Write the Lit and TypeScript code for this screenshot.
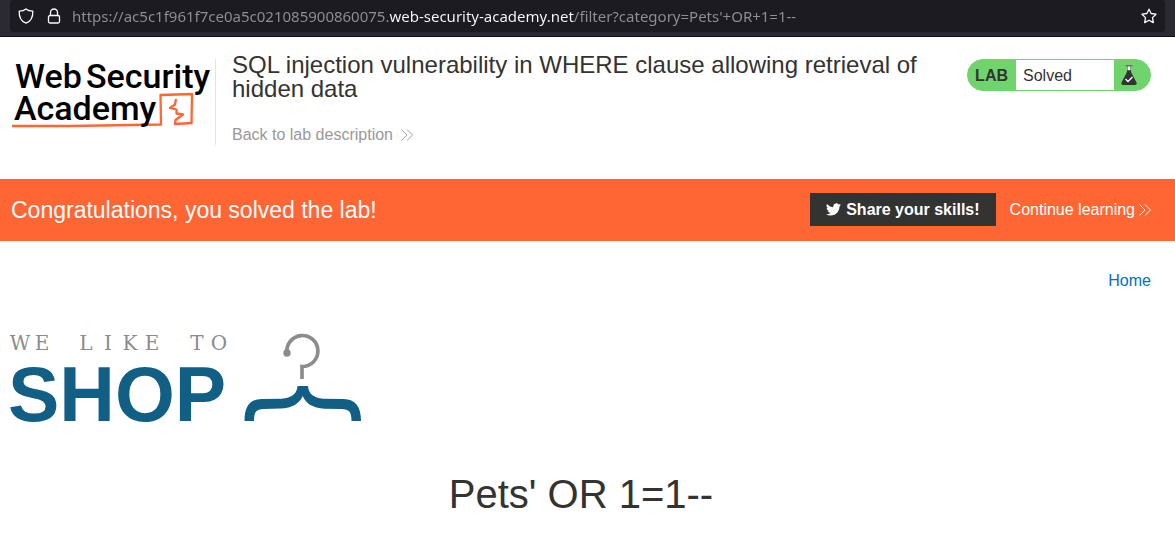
import { LitElement, html, css } from "lit";
import { customElement } from "lit/decorators.js";

const chevrons = html`<svg class="chevrons" viewBox="0 0 12 12" aria-hidden="true">
  <path d="M.5 .5 6 6 .5 11.5M6 .5 11.5 6 6 11.5" fill="none" stroke="currentColor" stroke-width=".9" />
</svg>`;

@customElement("address-bar")
class AddressBar extends LitElement {
  static styles = css`
    :host {
      display: block;
      background: #2b2a33;
      border-bottom: 1px solid #0c0c0d;
      padding: 0 10px 4px;
    }
    .field {
      display: flex;
      align-items: center;
      height: 32px;
      padding: 0 8px;
      background: #1c1b22;
      border-radius: 4px;
      color: #fbfbfe;
    }
    .icon {
      width: 16px;
      height: 16px;
      flex: none;
      fill: none;
      stroke: currentColor;
      stroke-width: 1.3;
      stroke-linejoin: round;
    }
    .lock {
      margin: 0 10px 0 12px;
    }
    .url {
      flex: 1;
      min-width: 0;
      height: 24px;
      padding: 0;
      border: 0;
      outline: 0;
      font: 15px/24px "Noto Sans", sans-serif;
      color: transparent;
      caret-color: #fbfbfe;
      background: linear-gradient(90deg, #8f8f96 317px, #fbfbfe 317px, #fbfbfe 502px, #8f8f96 502px);
      background-clip: text;
      -webkit-background-clip: text;
    }
    .star {
      display: flex;
      padding: 0;
      border: 0;
      background: none;
      color: inherit;
    }
  `;

  render() {
    return html`<div class="field">
      <svg class="icon" viewBox="0 0 16 16" aria-hidden="true">
        <path d="M8 .9C6.4 2.2 3.5 3 1.2 3.2 1 8.8 3.2 13.4 8 15.2 12.8 13.4 15 8.8 14.8 3.2 12.5 3 9.6 2.2 8 .9Z" />
      </svg>
      <svg class="icon lock" viewBox="0 0 16 16" aria-hidden="true">
        <rect x="2.5" y="7.5" width="11" height="7.5" rx="1.5" />
        <path d="M4.5 7.500V4.500a3.500 3.500 0 0 1 7 0V7.500" />
      </svg>
      <input
        class="url"
        type="text"
        aria-label="Address"
        spellcheck="false"
        value="https://ac5c1f961f7ce0a5c021085900860075.web-security-academy.net/filter?category=Pets'+OR+1=1--"
      />
      <button class="star" aria-label="Bookmark this page">
        <svg class="icon" viewBox="0 0 16 16" aria-hidden="true">
          <path d="M8 1.2 10.1 5.5 15 6.2 11.5 9.6 12.3 14.6 8 12.3 3.7 14.6 4.5 9.6 1 6.2 5.9 5.5Z" />
        </svg>
      </button>
    </div>`;
  }
}

@customElement("academy-logo")
class AcademyLogo extends LitElement {
  static styles = css`
    :host {
      display: block;
      flex: none;
    }
    .logo {
      display: block;
      width: 204px;
      height: 86px;
      overflow: visible;
    }
    .name {
      font: 500 34px Roboto, sans-serif;
      fill: #000;
    }
    .line {
      fill: none;
      stroke: #ff6633;
      stroke-width: 2.3;
      stroke-linejoin: round;
    }
  `;

  render() {
    return html`<svg class="logo" viewBox="0 0 204 86" role="img" aria-label="Web Security Academy">
      <path class="line" d="M1 67 60 67 150 65.5 149.500 36 181 35 180.500 65" />
      <path class="line" d="M165 40 164 45.5 159 49 165.5 50.5 165.500 54.500 172 55.500 164.500 61 164 65 181 64" />
      <text class="name" x="4" y="29">Web</text>
      <text class="name" x="75" y="29">Security</text>
      <text class="name" x="3" y="61">Academy</text>
    </svg>`;
  }
}

@customElement("lab-status")
class LabStatus extends LitElement {
  static styles = css`
    :host {
      display: flex;
      flex: none;
      align-items: center;
      box-sizing: border-box;
      height: 32px;
      border: 1px solid #70d46c;
      border-radius: 16px;
      overflow: hidden;
      background: #70d46c;
      font: 16px/30px "Liberation Sans", sans-serif;
      color: #333332;
    }
    .tag {
      padding: 2px 8px 0 7px;
      font-weight: 700;
    }
    .state {
      box-sizing: border-box;
      width: 98px;
      padding: 1px 7px 0;
      height: 30px;
      background: #fff;
    }
    .flask {
      width: 16px;
      height: 20px;
      margin: 0 13px 0 7px;
    }
  `;

  render() {
    return html`<span class="tag">LAB</span><span class="state">Solved</span>
      <svg class="flask" viewBox="0 0 16 20" aria-hidden="true">
        <path d="M6 .8V7L.5 17.500Q-.3 20 2 20H14Q16.300 20 15.500 17.500L10 7V.8Z" fill="#333332" />
        <path d="M6.500 1.200h3v4h-3z" fill="#fff" />
        <path d="M4.500 .6h7" stroke="#5c7a5a" stroke-width="1.2" />
        <path d="M4.500 14 7 16.500 11.500 12" fill="none" stroke="#fff" stroke-width="1.3" />
      </svg>`;
  }
}

@customElement("shop-logo")
class ShopLogo extends LitElement {
  static styles = css`
    :host {
      display: block;
    }
    .logo {
      display: block;
      width: 352px;
      height: 92px;
      overflow: visible;
    }
    .tagline {
      font: 20px "DejaVu Serif", serif;
      text-anchor: middle;
      fill: #8c8c8c;
    }
    .shop {
      font: 700 77px "Liberation Sans", sans-serif;
      fill: #115f84;
    }
  `;

  render() {
    return html`<svg class="logo" viewBox="0 0 352 92" role="img" aria-label="We like to shop">
      <text class="tagline" x="9 31 53 75 97 119 141 163 186 208" y="17">WE LIKE TO</text>
      <text class="shop" x="-3" y="88">SHOP</text>
      <path d="M276 20A15.500 15.500 0 1 1 291 33.500V46" fill="none" stroke="#8c8c8c" stroke-width="3.7" />
      <circle cx="276" cy="20" r="3.7" fill="#8c8c8c" />
      <path d="M286.500 53H297C297.500 60.500 302.500 65 312.500 65.700L332.500 66C344.500 66.500 350 73.500 350 88H340.500C340.500 78.500 338 76.300 330.500 76L313.500 75.700C301.500 75 295 70.500 291.700 63 288.500 70.500 281.500 75 269.500 75.500L252.500 76C245.500 76.300 243 78.500 243 88H233.500C233.500 73.500 238.500 66.500 250.500 66L270.500 65.700C281 65 286 60.500 286.500 53Z" fill="#115f84" />
    </svg>`;
  }
}

@customElement("app-root")
class AppRoot extends LitElement {
  static styles = css`
    :host {
      display: block;
      min-height: 100vh;
      background: #fff;
      color: #333332;
      font: 16px/20px "Liberation Sans", Arial, sans-serif;
    }
    a {
      text-decoration: none;
    }
    .header {
      display: flex;
      align-items: flex-start;
      padding: 22px 24px 34px 11px;
    }
    .about {
      flex: 1;
      min-width: 0;
      min-height: 86px;
      margin-right: 24px;
      padding-left: 16px;
      border-left: 1px solid #e4e4e4;
    }
    .title {
      max-width: 720px;
      margin: -6px 0 24px;
      font-size: 24px;
      line-height: 24px;
      font-weight: 400;
    }
    .link {
      display: flex;
      align-items: center;
      gap: 8px;
      color: #999;
    }
    .chevrons {
      width: 12px;
      height: 12px;
    }
    .banner {
      display: flex;
      align-items: center;
      padding: 14px 24px 15px 11px;
      background: #ff6633;
      color: #fff;
    }
    .message {
      flex: 1;
      margin: 0;
      font-size: 23px;
      line-height: 28px;
      font-weight: 400;
    }
    .share {
      display: flex;
      align-items: center;
      gap: 5px;
      height: 33px;
      margin-right: 14px;
      padding: 0 16px;
      border: 0;
      background: #333332;
      color: #fff;
      font: 700 16px/20px "Liberation Sans", Arial, sans-serif;
    }
    .bird {
      width: 15px;
      height: 15px;
    }
    .next {
      gap: 4px;
      color: #fff;
    }
    .main {
      padding: 30px 24px 0 11px;
    }
    .nav {
      display: flex;
      justify-content: flex-end;
      margin-bottom: 42px;
    }
    .home {
      color: #0071bc;
    }
    .heading {
      margin: 45px 0 0;
      text-align: center;
      font-size: 40px;
      line-height: 48px;
      font-weight: 400;
    }
  `;

  render() {
    return html`
      <address-bar></address-bar>
      <header class="header">
        <academy-logo></academy-logo>
        <div class="about">
          <h2 class="title">SQL injection vulnerability in WHERE clause allowing retrieval of hidden data</h2>
          <a class="link" href="#lab">Back to lab description ${chevrons}</a>
        </div>
        <lab-status></lab-status>
      </header>
      <section class="banner">
        <h4 class="message">Congratulations, you solved the lab!</h4>
        <button class="share">
          <svg class="bird" viewBox="0 1 24 22" aria-hidden="true">
            <path fill="currentColor" d="M23.950 4.570a10 10 0 0 1-2.820.77 4.960 4.960 0 0 0 2.160-2.720c-.95.55-2 .95-3.130 1.180a4.920 4.920 0 0 0-8.380 4.480C7.690 8.090 4.070 6.130 1.640 3.160a4.920 4.920 0 0 0 1.520 6.570 4.900 4.900 0 0 1-2.230-.61v.06a4.920 4.920 0 0 0 3.950 4.830 5 5 0 0 1-2.210.08 4.940 4.940 0 0 0 4.600 3.420A9.870 9.870 0 0 1 0 19.540a14 14 0 0 0 7.550 2.210c9.050 0 14-7.500 14-13.980 0-.21 0-.42-.02-.63a9.940 9.940 0 0 0 2.460-2.550z" />
          </svg>
          Share your skills!
        </button>
        <a class="link next" href="#next">Continue learning ${chevrons}</a>
      </section>
      <main class="main">
        <nav class="nav"><a class="home" href="#home">Home</a></nav>
        <shop-logo></shop-logo>
        <h1 class="heading">Pets' OR 1=1--</h1>
      </main>
    `;
  }
}
